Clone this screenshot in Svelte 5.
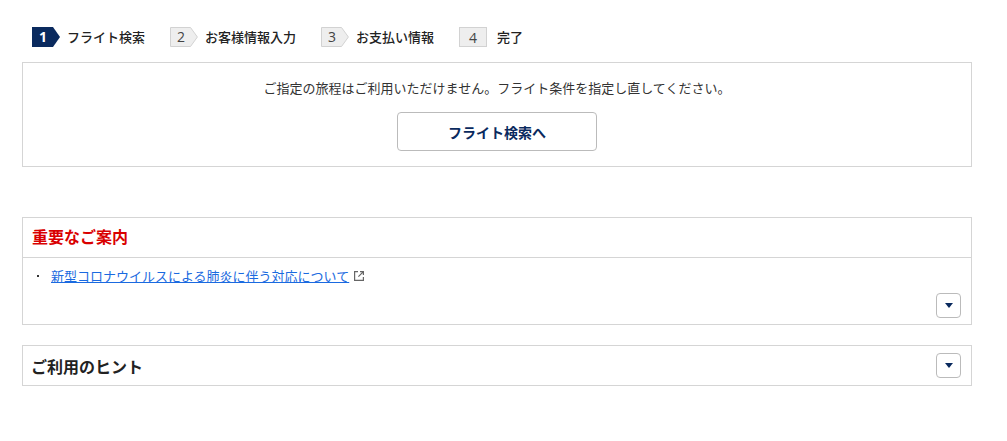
<script>
	const steps = [
		{ num: '1', label: 'フライト検索', current: true, arrow: true },
		{ num: '2', label: 'お客様情報入力', arrow: true },
		{ num: '3', label: 'お支払い情報', arrow: true },
		{ num: '4', label: '完了', arrow: false }
	];
</script>

<div class="page">
	<ol class="steps">
		{#each steps as step}
			<li class="step">
				{#if step.current}
					<svg class="badge" width="28" height="20" viewBox="0 0 28 20">
						<path d="M0 0H21L28 10L21 20H0Z" fill="#0a2a5e" />
						<text x="11" y="15" text-anchor="middle" class="badge-num current">{step.num}</text>
					</svg>
				{:else if step.arrow}
					<svg class="badge" width="28" height="20" viewBox="0 0 28 20">
						<path d="M.5 .5H20.5L27.4 10L20.5 19.5H.5Z" fill="#eee" stroke="#d2d2d2" />
						<text x="11" y="15" text-anchor="middle" class="badge-num">{step.num}</text>
					</svg>
				{:else}
					<span class="badge-box">{step.num}</span>
				{/if}
				<span class="step-label">{step.label}</span>
			</li>
		{/each}
	</ol>

	<section class="notice">
		<p>ご指定の旅程はご利用いただけません。フライト条件を指定し直してください。</p>
		<button class="search-btn">フライト検索へ</button>
	</section>

	<section class="panel important">
		<h2 class="panel-title red">重要なご案内</h2>
		<div class="panel-body">
			<ul>
				<li>
					<a href="#covid">新型コロナウイルスによる肺炎に伴う対応について</a>
					<svg class="ext" width="12" height="12" viewBox="0 0 12 12" fill="none" stroke="#666" stroke-width="1.2">
						<path d="M5 1.6H1.6V10.4H10.4V7" />
						<path d="M7 1.6H10.4V5M10.4 1.6L5.4 6.6" />
					</svg>
				</li>
			</ul>
			<div class="toggle-row">
				<button class="toggle" aria-label="開閉"><span class="caret"></span></button>
			</div>
		</div>
	</section>

	<section class="panel hint">
		<h2 class="panel-title">ご利用のヒント</h2>
		<button class="toggle" aria-label="開閉"><span class="caret"></span></button>
	</section>
</div>

<style>
	:global(body) {
		background: #fff;
	}

	.page {
		width: 950px;
		margin-left: 22px;
		padding-top: 27px;
		font-family: 'Noto Sans CJK JP', 'Noto Sans', sans-serif;
		color: #222;
	}

	/* step indicator */
	.steps {
		display: flex;
		list-style: none;
		margin: 0;
		padding: 0 0 0 10px;
		height: 20px;
		gap: 25px;
	}

	.step {
		display: flex;
		align-items: center;
		gap: 7px;
		font-size: 13px;
		font-weight: 500;
	}

	.step-label {
		line-height: 20px;
	}

	.badge {
		display: block;
	}

	.badge-num {
		font-size: 14px;
		font-family: 'Open Sans', sans-serif;
		fill: #444;
	}

	.badge-num.current {
		fill: #fff;
		font-weight: 700;
	}

	.badge-box {
		box-sizing: border-box;
		width: 28px;
		height: 20px;
		display: flex;
		align-items: center;
		justify-content: center;
		background: #eee;
		border: 1px solid #d2d2d2;
		font-family: 'Open Sans', sans-serif;
		font-size: 14px;
		color: #444;
		margin-right: 3px;
	}

	/* notice */
	.notice {
		box-sizing: border-box;
		height: 105px;
		margin-top: 15px;
		border: 1px solid #d5d5d5;
		display: flex;
		flex-direction: column;
		align-items: center;
		padding-top: 15px;
	}

	.notice p {
		margin: 0;
		font-size: 13px;
		line-height: 20px;
		color: #333;
	}

	.search-btn {
		box-sizing: border-box;
		width: 200px;
		height: 39px;
		margin-top: 14px;
		background: #fff;
		border: 1px solid #bbb;
		border-radius: 4px;
		font-family: inherit;
		font-size: 14px;
		font-weight: 700;
		color: #0a2a5e;
	}

	/* panels */
	.panel {
		border: 1px solid #d5d5d5;
		box-sizing: border-box;
	}

	.important {
		margin-top: 50px;
		height: 108px;
	}

	.panel-title {
		margin: 0;
		font-size: 16px;
		font-weight: 700;
		line-height: 24px;
		color: #222;
	}

	.panel-title.red {
		color: #d90000;
		height: 40px;
		box-sizing: border-box;
		padding: 6px 9px 0;
		border-bottom: 1px solid #d5d5d5;
	}

	.panel-body {
		padding: 8px 10px 0 9px;
	}

	.panel-body ul {
		list-style: none;
		margin: 0;
		padding: 0;
	}

	.panel-body li {
		display: flex;
		align-items: center;
		font-size: 13px;
		line-height: 20px;
		padding-left: 19px;
		position: relative;
	}

	.panel-body li::before {
		content: '';
		position: absolute;
		left: 5px;
		top: 9px;
		width: 2px;
		height: 2px;
		background: #333;
	}

	.panel-body a {
		color: #1a6ae0;
		text-decoration: underline;
	}

	.ext {
		margin-left: 4px;
	}

	.toggle-row {
		display: flex;
		justify-content: flex-end;
		margin-top: 7px;
	}

	.toggle {
		box-sizing: border-box;
		width: 25px;
		height: 25px;
		padding: 0;
		background: #fff;
		border: 1px solid #bbb;
		border-radius: 4px;
		display: flex;
		align-items: center;
		justify-content: center;
	}

	.caret {
		width: 0;
		height: 0;
		border-left: 4.5px solid transparent;
		border-right: 4.5px solid transparent;
		border-top: 5px solid #0a2a5e;
	}

	.hint {
		margin-top: 20px;
		height: 41px;
		display: flex;
		align-items: center;
		justify-content: space-between;
		padding: 0 10px 0 8px;
	}
</style>
